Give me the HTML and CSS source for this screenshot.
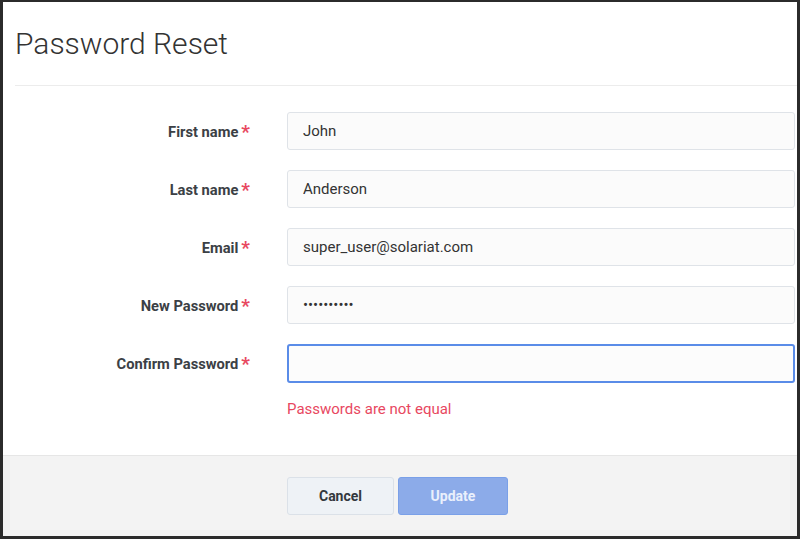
FILE: index.html
```html
<!DOCTYPE html>
<html lang="en">
<head>
<meta charset="utf-8">
<title>Password Reset</title>
<link rel="stylesheet" href="styles.css">
</head>
<body>
<div class="frame">
  <header class="header">
    <h1 class="title">Password Reset</h1>
  </header>
  <form class="form">
    <div class="row">
      <label class="label" for="fn">First name<span class="req">*</span></label>
      <input class="input" id="fn" type="text" value="John">
    </div>
    <div class="row">
      <label class="label" for="ln">Last name<span class="req">*</span></label>
      <input class="input" id="ln" type="text" value="Anderson">
    </div>
    <div class="row">
      <label class="label" for="em">Email<span class="req">*</span></label>
      <input class="input" id="em" type="text" value="super_user@solariat.com">
    </div>
    <div class="row">
      <label class="label" for="np">New Password<span class="req">*</span></label>
      <input class="input" id="np" type="password" value="abcdefghij">
    </div>
    <div class="row">
      <label class="label" for="cp">Confirm Password<span class="req">*</span></label>
      <input class="input input-focus" id="cp" type="password" value="">
    </div>
    <div class="row row-error">
      <span></span>
      <div class="error">Passwords are not equal</div>
    </div>
  </form>
  <footer class="footer">
    <button class="btn btn-cancel" type="button">Cancel</button>
    <button class="btn btn-update" type="button">Update</button>
  </footer>
</div>
</body>
</html>
```

FILE: styles.css
```css
* { box-sizing: border-box; }
html, body { margin: 0; padding: 0; background: #fff; }
body { font-family: Roboto, "Liberation Sans", Arial, sans-serif; color: #333; }

.frame {
  width: 800px;
  height: 539px;
  border-style: solid;
  border-color: #2b2b2b;
  border-width: 2px 3px 3px 3px;
  display: flex;
  flex-direction: column;
  background: #fff;
}

.header {
  margin-left: 12px;
  height: 84px;
  border-bottom: 1px solid #ececec;
  display: flex;
  align-items: center;
  padding-left: 0;
}
.title {
  margin: 0;
  font-size: 30px;
  font-weight: 300;
  color: #333;
  line-height: 36px;
  padding-bottom: 0;
}

.form {
  flex: 1;
  padding-top: 26px;
}
.row {
  display: grid;
  grid-template-columns: 247px 508px;
  column-gap: 37px;
  align-items: center;
  margin-bottom: 20px;
}
.label {
  text-align: right;
  font-size: 14.7px;
  font-weight: 700;
  color: #3b4045;
}
.req {
  color: #e8485f;
  font-size: 19px;
  margin-left: 3px;
  vertical-align: -1px;
  line-height: 1;
}
.input {
  height: 38px;
  width: 508px;
  border: 1px solid #dfe3e8;
  border-radius: 3px;
  background: #fbfbfb;
  padding: 0 15px;
  font-family: Roboto, "Liberation Sans", Arial, sans-serif;
  font-size: 15px;
  color: #333;
  outline: none;
}
.input-focus {
  height: 39px;
  border: 2px solid #5a8ce8;
  background: #fcfcfc;
}
.row-error { margin-top: -3px; }
.error {
  color: #e8485f;
  font-size: 15px;
}

.footer {
  height: 81px;
  background: #f3f3f3;
  border-top: 1px solid #e6e6e6;
  display: flex;
  align-items: center;
  padding-left: 284px;
  gap: 4px;
}
.btn {
  height: 38px;
  border-radius: 3px;
  font-family: Roboto, "Liberation Sans", Arial, sans-serif;
  font-size: 14px;
  font-weight: 700;
  cursor: pointer;
}
.btn-cancel {
  width: 107px;
  background: #eef2f6;
  border: 1px solid #dbe1e8;
  color: #33383d;
}
.btn-update {
  width: 110px;
  background: #8cabe9;
  border: 1px solid #7aa0e8;
  color: #eaf0fc;
}
```
